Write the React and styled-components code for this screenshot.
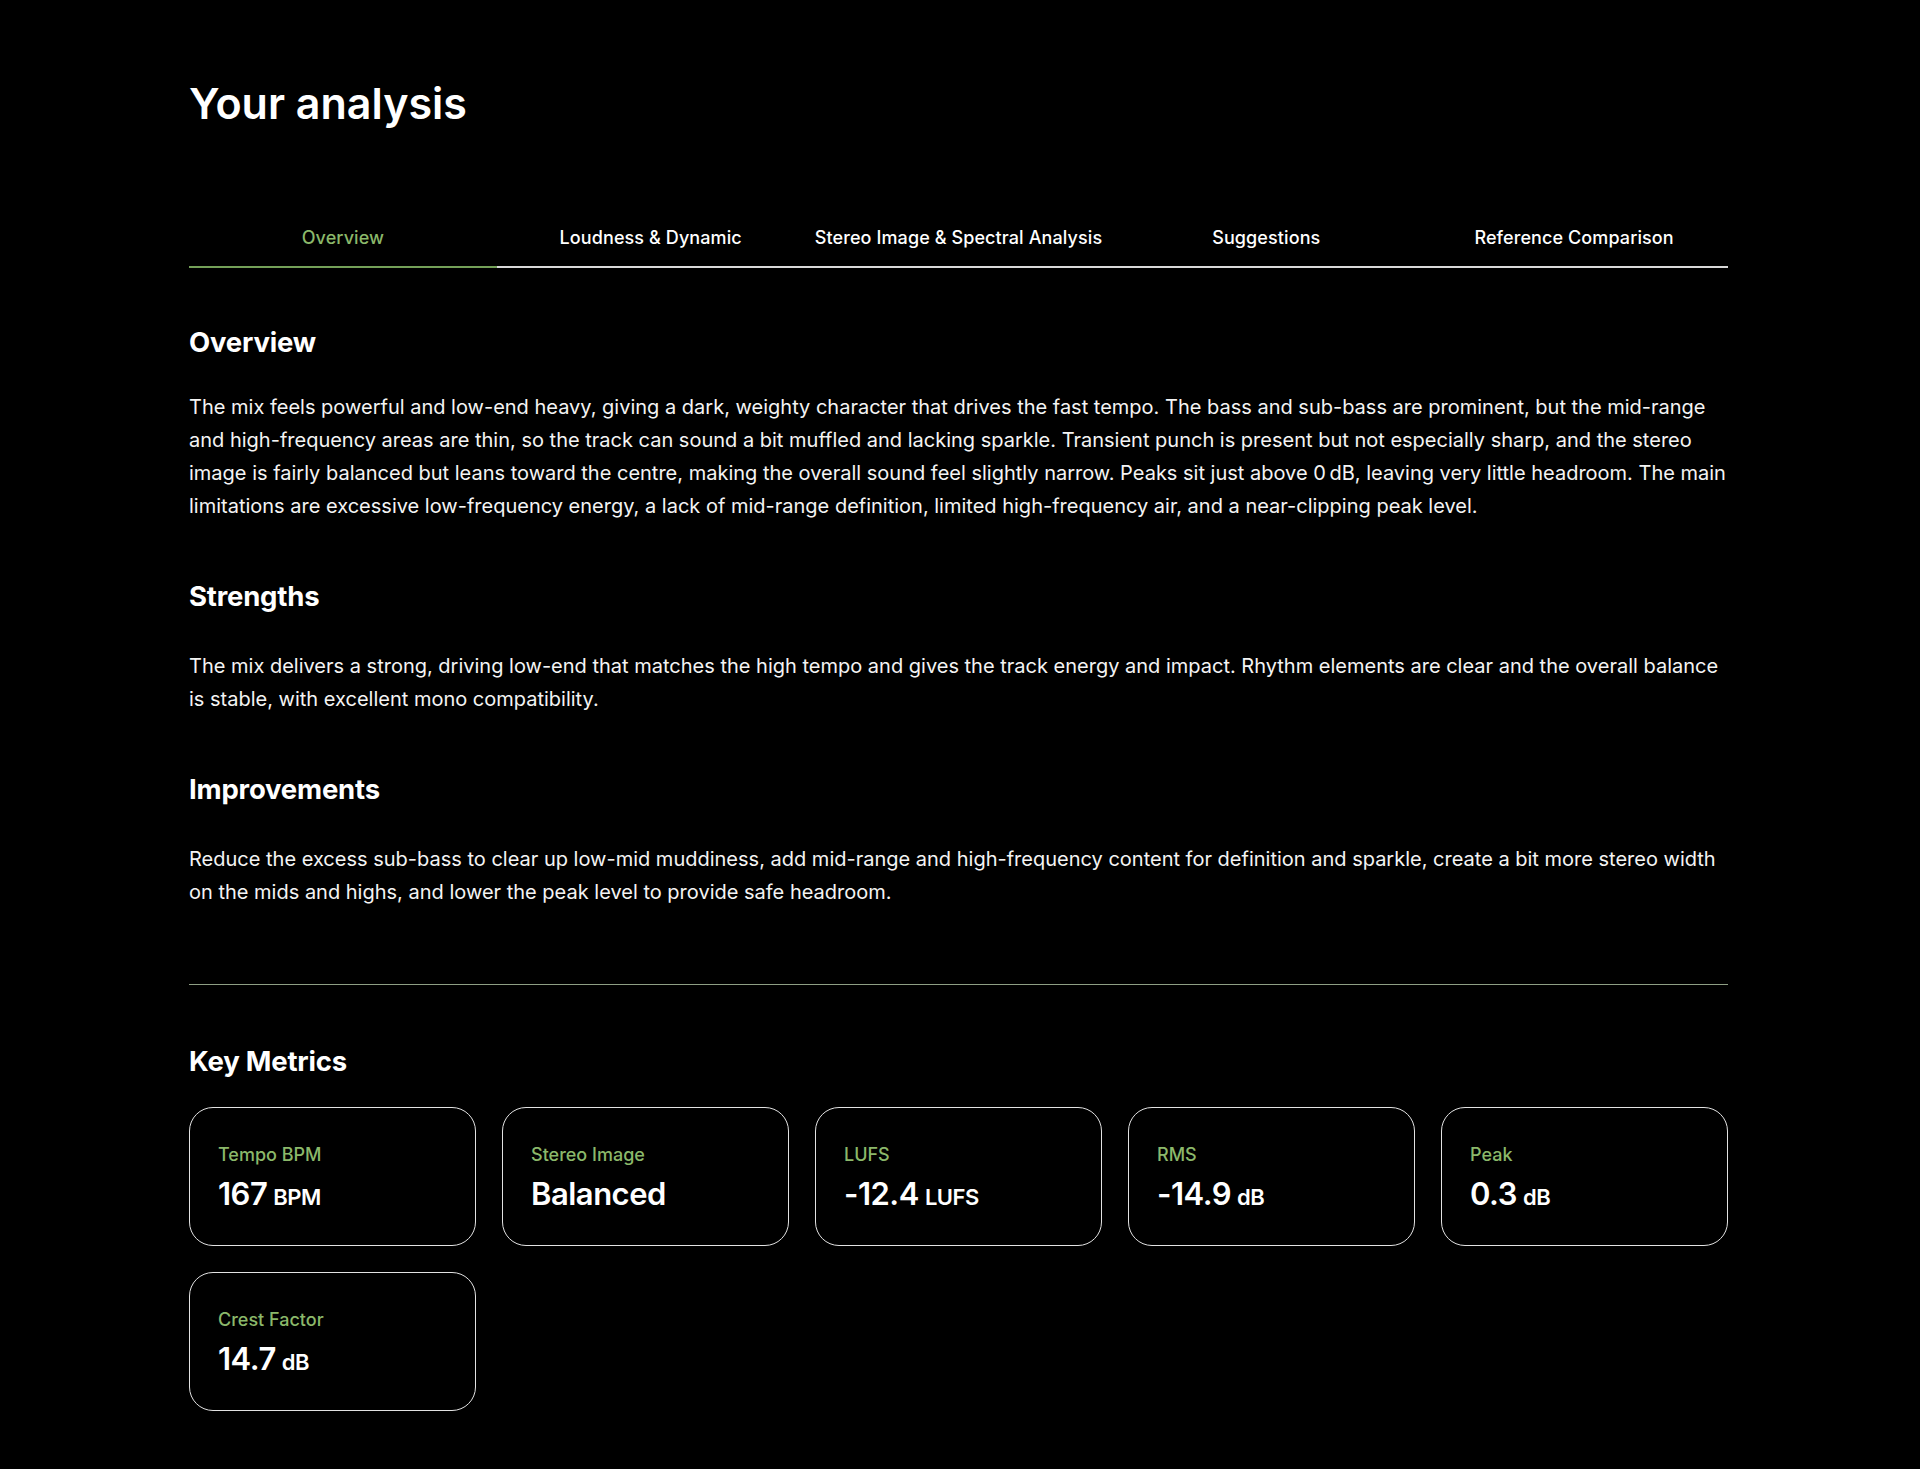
import React from "react";
import styled, { createGlobalStyle } from "styled-components";

const tabs = [
  "Overview",
  "Loudness & Dynamic",
  "Stereo Image & Spectral Analysis",
  "Suggestions",
  "Reference Comparison",
];

const sections = [
  {
    title: "Overview",
    text: "The mix feels powerful and low-end heavy, giving a dark, weighty character that drives the fast tempo. The bass and sub-bass are prominent, but the mid-range and high-frequency areas are thin, so the track can sound a bit muffled and lacking sparkle. Transient punch is present but not especially sharp, and the stereo image is fairly balanced but leans toward the centre, making the overall sound feel slightly narrow. Peaks sit just above 0\u2009dB, leaving very little headroom. The main limitations are excessive low-frequency energy, a lack of mid-range definition, limited high-frequency air, and a near-clipping peak level.",
  },
  {
    title: "Strengths",
    text: "The mix delivers a strong, driving low-end that matches the high tempo and gives the track energy and impact. Rhythm elements are clear and the overall balance is stable, with excellent mono compatibility.",
  },
  {
    title: "Improvements",
    text: "Reduce the excess sub-bass to clear up low-mid muddiness, add mid-range and high-frequency content for definition and sparkle, create a bit more stereo width on the mids and highs, and lower the peak level to provide safe headroom.",
  },
];

const metrics = [
  { label: "Tempo BPM", value: "167", unit: "BPM" },
  { label: "Stereo Image", value: "Balanced" },
  { label: "LUFS", value: "-12.4", unit: "LUFS" },
  { label: "RMS", value: "-14.9", unit: "dB" },
  { label: "Peak", value: "0.3", unit: "dB" },
  { label: "Crest Factor", value: "14.7", unit: "dB" },
];

export default function App() {
  return (
    <>
      <GlobalStyle />
      <Page>
        <Title>Your analysis</Title>

        <TabBar>
          {tabs.map((t, i) => (
            <Tab key={t} active={i === 0}>
              {t}
            </Tab>
          ))}
        </TabBar>

        {sections.map((s, i) => (
          <Section key={s.title} first={i === 0}>
            <Heading>{s.title}</Heading>
            <Paragraph first={i === 0}>{s.text}</Paragraph>
          </Section>
        ))}

        <Divider />

        <MetricsHeading>Key Metrics</MetricsHeading>
        <Grid>
          {metrics.map(m => (
            <Card key={m.label}>
              <Label>{m.label}</Label>
              <Value>
                {m.value}
                {m.unit && <Unit>{m.unit}</Unit>}
              </Value>
            </Card>
          ))}
        </Grid>
      </Page>
    </>
  );
}

const GlobalStyle = createGlobalStyle`
  html, body {
    margin: 0;
    background: #000;
    color: #fff;
    font-family: Inter, "Noto Sans", sans-serif;
  }
`;

const Page = styled.div`
  width: 1539px;
  margin: 0 auto;
  padding: 79px 3px 58px 0;
`;

const Title = styled.h1`
  margin: 0;
  font-size: 43px;
  line-height: 48px;
  font-weight: 600;
  letter-spacing: 0;
`;

const TabBar = styled.div`
  display: grid;
  grid-template-columns: repeat(5, 1fr);
  margin-top: 80px;
  border-bottom: 2px solid #d8d8d8;
`;

const Tab = styled.div`
  padding: 20px 0 17px;
  margin-bottom: -2px;
  text-align: center;
  font-size: 18px;
  line-height: 22px;
  font-weight: 500;
  letter-spacing: 0.1px;
  color: ${p => (p.active ? "#8bb86a" : "#fff")};
  border-bottom: 2px solid ${p => (p.active ? "#74a058" : "transparent")};
`;

const Section = styled.section`
  margin-top: ${p => (p.first ? "58px" : "57px")};
`;

const Heading = styled.h2`
  margin: 0;
  font-size: 27.5px;
  line-height: 32px;
  font-weight: 700;
  letter-spacing: -0.2px;
`;

const Paragraph = styled.p`
  margin: ${p => (p.first ? "33px" : "38px")} 0 0;
  font-size: 20px;
  line-height: 33px;
  font-weight: 400;
  color: #f4f4f4;
`;

const Divider = styled.hr`
  margin: 75px 0 0;
  border: 0;
  border-top: 1px solid #8e9e84;
`;

const MetricsHeading = styled(Heading)`
  margin-top: 60px;
`;

const Grid = styled.div`
  display: grid;
  grid-template-columns: repeat(5, 1fr);
  gap: 26px;
  margin-top: 30px;
`;

const Card = styled.div`
  box-sizing: border-box;
  height: 139px;
  padding: 37px 28px 0;
  border: 1px solid #e2e2e2;
  border-radius: 24px;
`;

const Label = styled.div`
  font-size: 18px;
  line-height: 20px;
  font-weight: 500;
  color: #8bb86a;
`;

const Value = styled.div`
  margin-top: 11px;
  font-size: 31px;
  line-height: 36px;
  font-weight: 600;
  letter-spacing: -0.5px;
`;

const Unit = styled.span`
  margin-left: 6px;
  font-size: 22px;
  font-weight: 600;
`;
